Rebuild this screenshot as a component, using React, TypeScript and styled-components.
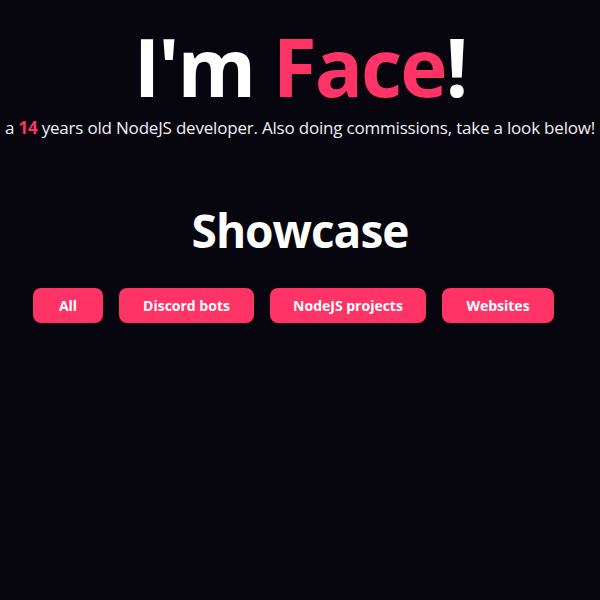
import React from "react";
import styled, { createGlobalStyle } from "styled-components";

const Global = createGlobalStyle`
  html, body { margin: 0; padding: 0; background: #07060f; }
  body { font-family: "Open Sans", "Noto Sans", sans-serif; color: #fff; }
`;

const Page = styled.div`
  width: 600px;
  height: 600px;
  background: #07060f;
  display: flex;
  flex-direction: column;
  align-items: center;
  overflow: hidden;
`;

const Title = styled.h1`
  margin: 22px 0 0;
  font-size: 80px;
  font-weight: 700;
  line-height: 88px;
  letter-spacing: -2px;
  white-space: nowrap;
`;

const Accent = styled.span`
  color: #ff3366;
`;

const Subtitle = styled.p`
  margin: 6px 0 0;
  font-size: 17px;
  line-height: 24px;
  color: #f0eff5;
  white-space: nowrap;
  letter-spacing: -0.2px;
`;

const Bold = styled.b`
  color: #ff3366;
  font-weight: 700;
`;

const Heading = styled.h2`
  margin: 60px 0 0;
  font-size: 46px;
  font-weight: 700;
  line-height: 60px;
  letter-spacing: -1px;
`;

const Filters = styled.div`
  margin-top: 28px;
  display: flex;
  gap: 16px;
  padding-right: 13px;
`;

const FilterButton = styled.button<{ $w: number }>`
  width: ${(p) => p.$w}px;
  height: 35px;
  border: none;
  border-radius: 8px;
  background: #ff3366;
  color: #fff;
  font-family: "Open Sans", "Noto Sans", sans-serif;
  font-size: 14px;
  font-weight: 700;
  padding: 0;
  cursor: pointer;
`;

const filters: [string, number][] = [
  ["All", 70],
  ["Discord bots", 135],
  ["NodeJS projects", 156],
  ["Websites", 112],
];

export default function App() {
  return (
    <>
      <Global />
      <Page>
        <Title>
          I'm <Accent>Face</Accent>!
        </Title>
        <Subtitle>
          a <Bold>14</Bold> years old NodeJS developer. Also doing commissions, take a look below!
        </Subtitle>
        <Heading>Showcase</Heading>
        <Filters>
          {filters.map(([label, w]) => (
            <FilterButton key={label} $w={w}>
              {label}
            </FilterButton>
          ))}
        </Filters>
      </Page>
    </>
  );
}
